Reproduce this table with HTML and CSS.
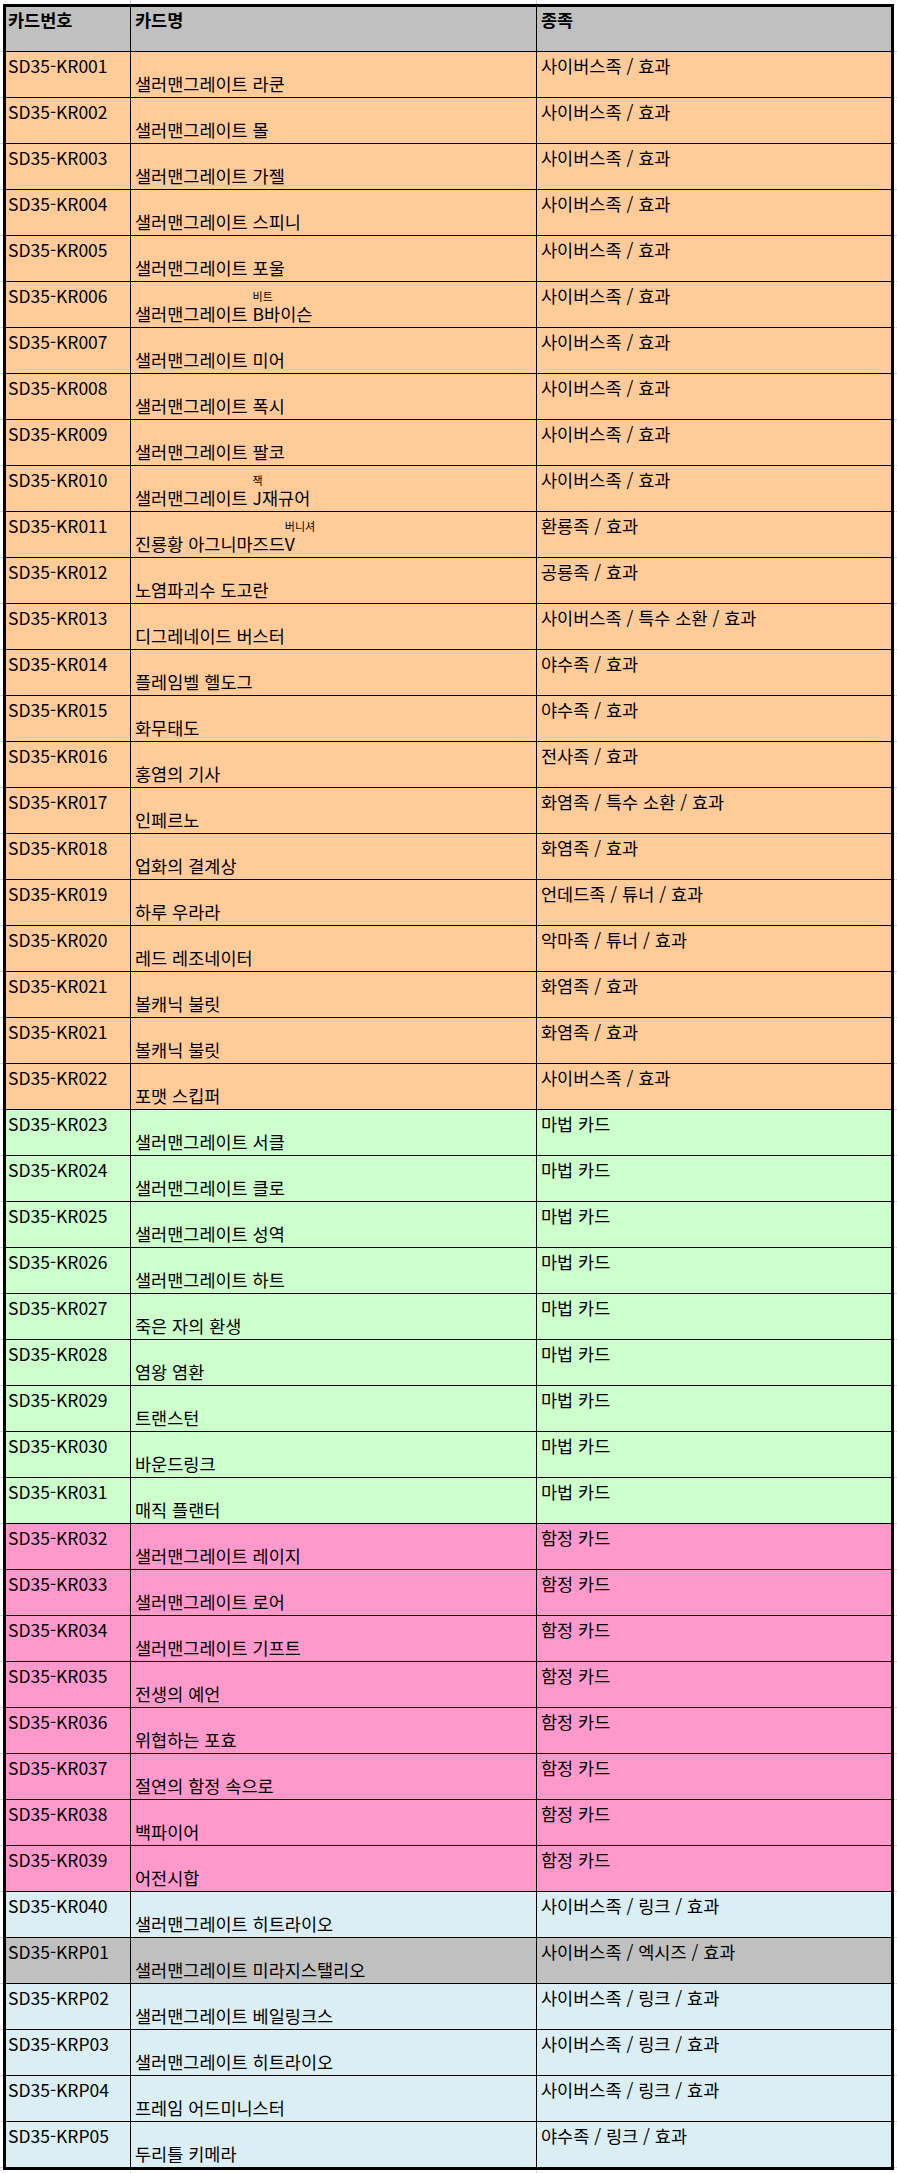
FILE: index.html
```html
<!DOCTYPE html>
<html lang="ko">
<head>
    <meta charset="UTF-8">
    <meta name="viewport" content="width=device-width, initial-scale=1.0">
    <title>SD35 카드 리스트</title>
    <link rel="stylesheet" href="styles.css">
</head>
<body>
    <table class="cards">
        <thead>
            <tr>
                <th class="col-no">카드번호</th>
                <th class="col-name">카드명</th>
                <th class="col-type">종족</th>
            </tr>
        </thead>
        <tbody>
            <tr class="monster"><td class="no">SD35-KR001</td><td class="name">샐러맨그레이트 라쿤</td><td class="type">사이버스족 / 효과</td></tr>
            <tr class="monster"><td class="no">SD35-KR002</td><td class="name">샐러맨그레이트 몰</td><td class="type">사이버스족 / 효과</td></tr>
            <tr class="monster"><td class="no">SD35-KR003</td><td class="name">샐러맨그레이트 가젤</td><td class="type">사이버스족 / 효과</td></tr>
            <tr class="monster"><td class="no">SD35-KR004</td><td class="name">샐러맨그레이트 스피니</td><td class="type">사이버스족 / 효과</td></tr>
            <tr class="monster"><td class="no">SD35-KR005</td><td class="name">샐러맨그레이트 포울</td><td class="type">사이버스족 / 효과</td></tr>
            <tr class="monster"><td class="no">SD35-KR006</td><td class="name">샐러맨그레이트 <span class="rb">B<span class="rt">비트</span></span>바이슨</td><td class="type">사이버스족 / 효과</td></tr>
            <tr class="monster"><td class="no">SD35-KR007</td><td class="name">샐러맨그레이트 미어</td><td class="type">사이버스족 / 효과</td></tr>
            <tr class="monster"><td class="no">SD35-KR008</td><td class="name">샐러맨그레이트 폭시</td><td class="type">사이버스족 / 효과</td></tr>
            <tr class="monster"><td class="no">SD35-KR009</td><td class="name">샐러맨그레이트 팔코</td><td class="type">사이버스족 / 효과</td></tr>
            <tr class="monster"><td class="no">SD35-KR010</td><td class="name">샐러맨그레이트 <span class="rb">J<span class="rt">잭</span></span>재규어</td><td class="type">사이버스족 / 효과</td></tr>
            <tr class="monster"><td class="no">SD35-KR011</td><td class="name">진룡황 아그니마즈드<span class="rb">V<span class="rt">버니셔</span></span></td><td class="type">환룡족 / 효과</td></tr>
            <tr class="monster"><td class="no">SD35-KR012</td><td class="name">노염파괴수 도고란</td><td class="type">공룡족 / 효과</td></tr>
            <tr class="monster"><td class="no">SD35-KR013</td><td class="name">디그레네이드 버스터</td><td class="type">사이버스족 / 특수 소환 / 효과</td></tr>
            <tr class="monster"><td class="no">SD35-KR014</td><td class="name">플레임벨 헬도그</td><td class="type">야수족 / 효과</td></tr>
            <tr class="monster"><td class="no">SD35-KR015</td><td class="name">화무태도</td><td class="type">야수족 / 효과</td></tr>
            <tr class="monster"><td class="no">SD35-KR016</td><td class="name">홍염의 기사</td><td class="type">전사족 / 효과</td></tr>
            <tr class="monster"><td class="no">SD35-KR017</td><td class="name">인페르노</td><td class="type">화염족 / 특수 소환 / 효과</td></tr>
            <tr class="monster"><td class="no">SD35-KR018</td><td class="name">업화의 결계상</td><td class="type">화염족 / 효과</td></tr>
            <tr class="monster"><td class="no">SD35-KR019</td><td class="name">하루 우라라</td><td class="type">언데드족 / 튜너 / 효과</td></tr>
            <tr class="monster"><td class="no">SD35-KR020</td><td class="name">레드 레조네이터</td><td class="type">악마족 / 튜너 / 효과</td></tr>
            <tr class="monster"><td class="no">SD35-KR021</td><td class="name">볼캐닉 불릿</td><td class="type">화염족 / 효과</td></tr>
            <tr class="monster"><td class="no">SD35-KR021</td><td class="name">볼캐닉 불릿</td><td class="type">화염족 / 효과</td></tr>
            <tr class="monster"><td class="no">SD35-KR022</td><td class="name">포맷 스킵퍼</td><td class="type">사이버스족 / 효과</td></tr>
            <tr class="spell"><td class="no">SD35-KR023</td><td class="name">샐러맨그레이트 서클</td><td class="type">마법 카드</td></tr>
            <tr class="spell"><td class="no">SD35-KR024</td><td class="name">샐러맨그레이트 클로</td><td class="type">마법 카드</td></tr>
            <tr class="spell"><td class="no">SD35-KR025</td><td class="name">샐러맨그레이트 성역</td><td class="type">마법 카드</td></tr>
            <tr class="spell"><td class="no">SD35-KR026</td><td class="name">샐러맨그레이트 하트</td><td class="type">마법 카드</td></tr>
            <tr class="spell"><td class="no">SD35-KR027</td><td class="name">죽은 자의 환생</td><td class="type">마법 카드</td></tr>
            <tr class="spell"><td class="no">SD35-KR028</td><td class="name">염왕 염환</td><td class="type">마법 카드</td></tr>
            <tr class="spell"><td class="no">SD35-KR029</td><td class="name">트랜스턴</td><td class="type">마법 카드</td></tr>
            <tr class="spell"><td class="no">SD35-KR030</td><td class="name">바운드링크</td><td class="type">마법 카드</td></tr>
            <tr class="spell"><td class="no">SD35-KR031</td><td class="name">매직 플랜터</td><td class="type">마법 카드</td></tr>
            <tr class="trap"><td class="no">SD35-KR032</td><td class="name">샐러맨그레이트 레이지</td><td class="type">함정 카드</td></tr>
            <tr class="trap"><td class="no">SD35-KR033</td><td class="name">샐러맨그레이트 로어</td><td class="type">함정 카드</td></tr>
            <tr class="trap"><td class="no">SD35-KR034</td><td class="name">샐러맨그레이트 기프트</td><td class="type">함정 카드</td></tr>
            <tr class="trap"><td class="no">SD35-KR035</td><td class="name">전생의 예언</td><td class="type">함정 카드</td></tr>
            <tr class="trap"><td class="no">SD35-KR036</td><td class="name">위협하는 포효</td><td class="type">함정 카드</td></tr>
            <tr class="trap"><td class="no">SD35-KR037</td><td class="name">절연의 함정 속으로</td><td class="type">함정 카드</td></tr>
            <tr class="trap"><td class="no">SD35-KR038</td><td class="name">백파이어</td><td class="type">함정 카드</td></tr>
            <tr class="trap"><td class="no">SD35-KR039</td><td class="name">어전시합</td><td class="type">함정 카드</td></tr>
            <tr class="link"><td class="no">SD35-KR040</td><td class="name">샐러맨그레이트 히트라이오</td><td class="type">사이버스족 / 링크 / 효과</td></tr>
            <tr class="xyz"><td class="no">SD35-KRP01</td><td class="name">샐러맨그레이트 미라지스탤리오</td><td class="type">사이버스족 / 엑시즈 / 효과</td></tr>
            <tr class="link"><td class="no">SD35-KRP02</td><td class="name">샐러맨그레이트 베일링크스</td><td class="type">사이버스족 / 링크 / 효과</td></tr>
            <tr class="link"><td class="no">SD35-KRP03</td><td class="name">샐러맨그레이트 히트라이오</td><td class="type">사이버스족 / 링크 / 효과</td></tr>
            <tr class="link"><td class="no">SD35-KRP04</td><td class="name">프레임 어드미니스터</td><td class="type">사이버스족 / 링크 / 효과</td></tr>
            <tr class="link"><td class="no">SD35-KRP05</td><td class="name">두리틀 키메라</td><td class="type">야수족 / 링크 / 효과</td></tr>
        </tbody>
    </table>
</body>
</html>
```

FILE: styles.css
```css
body {
    margin: 0;
    min-height: 2173px;
    background-color: #fff;
    /* spreadsheet gridlines peeking round the table */
    background-image:
        linear-gradient(#d9d9d9, #d9d9d9),
        linear-gradient(#d9d9d9, #d9d9d9),
        repeating-linear-gradient(to bottom, transparent 0, transparent 45px, #d9d9d9 45px, #d9d9d9 46px);
    background-size: 1px 100%, 1px 100%, 100% 100%;
    background-position: 130px 0, 536px 0, 0 6px;
    background-repeat: no-repeat, no-repeat, repeat;
}
.cards {
    border-collapse: separate;
    border-spacing: 0;
    border: 3px solid #000;
    margin: 4px 0 0 3px;
    width: 891px;
    table-layout: fixed;
    font-family: "Noto Sans CJK KR", "Noto Sans", sans-serif;
    font-size: 17.5px;
    line-height: 22px;
    color: #000;
}
th, td {
    box-sizing: border-box;
    height: 46px;
    padding: 0 0 0 4px;
    border-right: 1px solid #000;
    border-bottom: 1px solid #000;
    text-align: left;
    white-space: nowrap;
}
th:last-child, td:last-child {
    border-right: none;
}
tbody tr:last-child td {
    border-bottom: none;
    height: 45px;
}
th {
    height: 45px;
    background-color: #c0c0c0;
    font-weight: bold;
    vertical-align: top;
    padding-top: 2px;
}
.col-no { width: 125px; }
.col-name { width: 406px; }
.col-type { width: 354px; }
.no, th.col-no {
    padding-left: 2px;
}
.no, .type {
    vertical-align: top;
    padding-top: 3px;
}
.name {
    vertical-align: bottom;
    padding-bottom: 2px;
}
.rb {
    position: relative;
}
.rt {
    position: absolute;
    left: 0;
    bottom: 24px;
    font-size: 11px;
    line-height: 11px;
    white-space: nowrap;
}
.monster td { background-color: #ffcc99; }
.spell td { background-color: #ccffcc; }
.trap td { background-color: #ff99cc; }
.link td { background-color: #daeef3; }
.xyz td { background-color: #c0c0c0; }
```
